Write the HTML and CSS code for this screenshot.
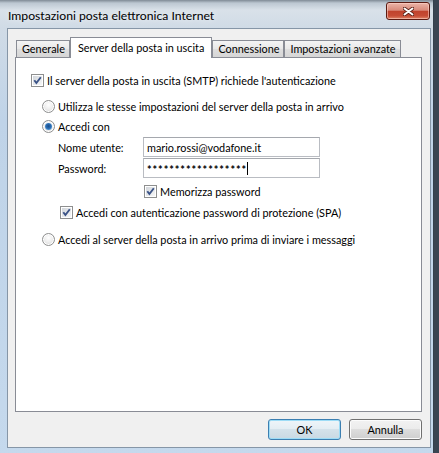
FILE: index.html
```html
<!DOCTYPE html>
<html lang="it">
<head>
    <meta charset="UTF-8">
    <title>Impostazioni posta elettronica Internet</title>
    <link rel="stylesheet" href="styles.css">
</head>
<body>
    <div class="window">
        <div class="titlebar">
            <span class="title">Impostazioni posta elettronica Internet</span>
            <button class="close" type="button" aria-label="Chiudi">
                <svg width="11" height="9" viewBox="0 0 11 9">
                    <path d="M1.5 1.5 L9.5 7.5 M9.5 1.5 L1.5 7.5" stroke="#5a2218" stroke-width="3.6" stroke-linecap="round"/>
                    <path d="M1.5 1.5 L9.5 7.5 M9.5 1.5 L1.5 7.5" stroke="#fff" stroke-width="2" stroke-linecap="round"/>
                </svg>
            </button>
        </div>

        <div class="client">
            <div class="tabs">
                <div class="tab">Generale</div>
                <div class="tab active">Server della posta in uscita</div>
                <div class="tab">Connessione</div>
                <div class="tab">Impostazioni avanzate</div>
            </div>

            <div class="panel">
                <div class="opt">
                    <span class="check"><svg width="11" height="11" viewBox="0 0 11 11"><path d="M2.3 5.2 L4.4 8 L8.8 2.2" stroke="#3b5387" stroke-width="1.9" fill="none"/></svg></span>
                    Il server della posta in uscita (SMTP) richiede l'autenticazione
                </div>
                <div class="opt opt-same">
                    <span class="radio"></span>
                    Utilizza le stesse impostazioni del server della posta in arrivo
                </div>
                <div class="opt opt-login">
                    <span class="radio on"></span>
                    Accedi con
                </div>

                <div class="fields">
                    <span class="field-label">Nome utente:</span>
                    <span class="field">mario.rossi@vodafone.it</span>
                    <span class="field-label">Password:</span>
                    <span class="field"><span class="secret">******************</span><span class="caret"></span></span>
                </div>

                <div class="opt opt-remember">
                    <span class="check"><svg width="11" height="11" viewBox="0 0 11 11"><path d="M2.3 5.2 L4.4 8 L8.8 2.2" stroke="#3b5387" stroke-width="1.9" fill="none"/></svg></span>
                    Memorizza password
                </div>
                <div class="opt opt-spa">
                    <span class="check"><svg width="11" height="11" viewBox="0 0 11 11"><path d="M2.3 5.2 L4.4 8 L8.8 2.2" stroke="#3b5387" stroke-width="1.9" fill="none"/></svg></span>
                    Accedi con autenticazione password di protezione (SPA)
                </div>
                <div class="opt opt-before">
                    <span class="radio"></span>
                    Accedi al server della posta in arrivo prima di inviare i messaggi
                </div>
            </div>

            <div class="actions">
                <button class="btn btn-default" type="button">OK</button>
                <button class="btn" type="button">Annulla</button>
            </div>
        </div>
    </div>
</body>
</html>
```

FILE: styles.css
```css
* {
    margin: 0;
    padding: 0;
    box-sizing: border-box;
}

body {
    background: #3a4552;
    font-family: Lato, "Noto Sans", sans-serif;
    font-size: 10.85px;
    color: #000;
    overflow: hidden;
}

/* cornice vetro */
.window {
    width: 434px;
    height: 460px;
    border-right: 1px solid #34404c;
    background: linear-gradient(to bottom, #7f8a95 0, #bcc7d1 3px, #d9e1e9 10px, #d0dbe6 28px, #bfd3e8 120px, #c5d9ed 100%);
}

.titlebar {
    display: flex;
    align-items: flex-start;
    height: 28px;
    padding: 0 3px 0 8px;
}

.title {
    margin-top: 8px;
    font-size: 12.2px;
    line-height: 15px;
    text-shadow: 0 0 6px rgba(255, 255, 255, 0.9);
}

.close {
    display: flex;
    align-items: center;
    justify-content: center;
    width: 44px;
    height: 18px;
    margin: 2px 0 0 auto;
    border: 1px solid #5b1b12;
    border-radius: 3px;
    background: linear-gradient(#ecb4a8 0, #d98b7b 45%, #c0432d 52%, #c64c35 80%, #df8568 100%);
    box-shadow: inset 0 0 0 1px rgba(255, 215, 205, 0.55);
}

.client {
    height: 420px;
    margin: 0 2px 0 7px;
    padding: 8px 8px 0 7px;
    border: 1px solid #8696a7;
    background: #f0f0f0;
}

/* schede */
.tabs {
    display: flex;
    align-items: flex-end;
    height: 21px;
    margin: 0 0 -1px 1px;
    position: relative;
    z-index: 1;
}

.tab {
    height: 17px;
    margin-bottom: 1px;
    padding: 0 4px 0 5px;
    line-height: 16px;
    white-space: nowrap;
    border: 1px solid #898c95;
    border-bottom: 0;
    background: linear-gradient(#f4f4f4, #e8e8e8 50%, #dedede 51%, #d6d6d6);
}

.tab.active {
    height: 21px;
    margin-bottom: 0;
    padding: 2px 7px 0;
    background: #fff;
}

.panel {
    height: 355px;
    padding: 14px 0 0 15px;
    border: 1px solid #898c95;
    background: #fff;
}

/* opzioni */
.opt {
    display: flex;
    align-items: center;
    gap: 3px;
    height: 16px;
    white-space: nowrap;
}

.opt-same {
    margin: 10px 0 0 11px;
}

.opt-login {
    margin: 4px 0 0 11px;
}

.opt-remember {
    margin: 5px 0 0 113px;
}

.opt-spa {
    margin: 5px 0 0 29px;
}

.opt-before {
    margin: 11px 0 0 11px;
}

.check {
    flex: none;
    width: 13px;
    height: 13px;
    border: 1px solid #8e8f8f;
    background: linear-gradient(135deg, #d2d6db, #f6f7f8) content-box, #fff;
    padding: 1px;
    position: relative;
}

.check svg {
    position: absolute;
    left: 0;
    top: 0;
}

.radio {
    flex: none;
    width: 13px;
    height: 13px;
    border: 1px solid #8e8f8f;
    border-radius: 50%;
    background: radial-gradient(circle at 50% 35%, #fff 0, #eeeeee 45%, #d3d3d3 100%);
    box-shadow: inset 0 0 0 1px #fff;
    position: relative;
}

.radio.on::after {
    content: '';
    position: absolute;
    left: 2px;
    top: 2px;
    width: 7px;
    height: 7px;
    border-radius: 50%;
    background: radial-gradient(circle at 50% 45%, #1a4c85 0, #2a6cb3 45%, #7cc0ee 100%);
}

/* campi */
.fields {
    display: grid;
    grid-template-columns: 85px 177px;
    grid-auto-rows: 20px;
    row-gap: 1px;
    margin: 3px 0 0 27px;
}

.field-label {
    display: flex;
    align-items: center;
}

.field {
    display: flex;
    align-items: center;
    padding: 0 3px;
    border: 1px solid #b9bcc2;
    border-top-color: #a5a8ae;
    background: #fff;
    white-space: nowrap;
}

.secret {
    letter-spacing: 0.95px;
    font-weight: bold;
    padding-top: 2px;
}

.caret {
    width: 1px;
    height: 13px;
    margin-left: 0;
    background: #000;
}

/* pulsanti */
.actions {
    display: flex;
    justify-content: flex-end;
    gap: 8px;
    margin-top: 7px;
}

.btn {
    width: 73px;
    height: 21px;
    font: inherit;
    color: #000;
    border: 1px solid #707070;
    border-radius: 3px;
    background: linear-gradient(#f2f2f2 0, #ebebeb 50%, #dddddd 50%, #cfcfcf 100%);
    box-shadow: inset 0 0 0 1px #fcfcfc;
}

.btn-default {
    border-color: #3c7fb1;
    background: linear-gradient(#eef5f9 0, #e3edf3 50%, #d4e2ea 50%, #c9d9e3 100%);
    box-shadow: inset 0 0 0 1px #9ddcf6;
}
```
